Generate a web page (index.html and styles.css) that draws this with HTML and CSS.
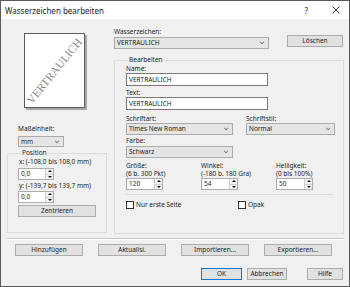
FILE: index.html
```html
<!DOCTYPE html>
<html lang="de">
<head>
    <meta charset="UTF-8">
    <title>Wasserzeichen bearbeiten</title>
    <link rel="stylesheet" href="styles.css">
</head>
<body>
    <div class="window">
        <div class="titlebar">
            <span class="title">Wasserzeichen bearbeiten</span>
            <span class="tb-help">?</span>
            <span class="tb-close">
                <svg width="8" height="8" viewBox="0 0 8 8"><path d="M0.5 0.5 L7.5 7.5 M7.5 0.5 L0.5 7.5" stroke="#222" stroke-width="0.9" fill="none"/></svg>
            </span>
        </div>

        <div class="main">
            <div class="left">
                <div class="preview"><span class="wm">VERTRAULICH</span></div>

                <div class="lbl unit-lbl">Maßeinheit:</div>
                <div class="combo unit">mm<span class="chev"></span></div>

                <fieldset class="group pos">
                    <legend>Position</legend>
                    <div class="lbl">x: (-108,0 bis 108,0 mm)</div>
                    <div class="spin pos-spin">
                        <span class="spin-val">0,0</span>
                        <span class="spin-btns"><i class="up"></i><i class="down"></i></span>
                    </div>
                    <div class="lbl y-lbl">y: (-139,7 bis 139,7 mm)</div>
                    <div class="spin pos-spin y-spin">
                        <span class="spin-val">0,0</span>
                        <span class="spin-btns"><i class="up"></i><i class="down"></i></span>
                    </div>
                    <button class="btn center-btn">Zentrieren</button>
                </fieldset>
            </div>

            <div class="right">
                <div class="lbl wz-lbl">Wasserzeichen:</div>
                <div class="wz-row">
                    <div class="combo wz">VERTRAULICH<span class="chev"></span></div>
                    <button class="btn del-btn">Löschen</button>
                </div>

                <fieldset class="group edit">
                    <legend>Bearbeiten</legend>
                    <div class="lbl">Name:</div>
                    <div class="field">VERTRAULICH</div>
                    <div class="lbl text-lbl">Text:</div>
                    <div class="field">VERTRAULICH</div>

                    <div class="cols font-row">
                        <div class="col">
                            <div class="lbl">Schriftart:</div>
                            <div class="combo font">Times New Roman<span class="chev"></span></div>
                        </div>
                        <div class="col style-col">
                            <div class="lbl">Schriftstil:</div>
                            <div class="combo style">Normal<span class="chev"></span></div>
                        </div>
                    </div>

                    <div class="lbl color-lbl">Farbe:</div>
                    <div class="combo font">Schwarz<span class="chev"></span></div>

                    <div class="cols num-row">
                        <div class="col num-col">
                            <div class="lbl">Größe:</div>
                            <div class="lbl">(6 b. 300 Pkt)</div>
                            <div class="spin num-spin">
                                <span class="spin-val">120</span>
                                <span class="spin-btns"><i class="up"></i><i class="down"></i></span>
                            </div>
                        </div>
                        <div class="col num-col">
                            <div class="lbl">Winkel:</div>
                            <div class="lbl">(-180 b. 180 Gra)</div>
                            <div class="spin num-spin">
                                <span class="spin-val">54</span>
                                <span class="spin-btns"><i class="up"></i><i class="down"></i></span>
                            </div>
                        </div>
                        <div class="col">
                            <div class="lbl">Helligkeit:</div>
                            <div class="lbl">(0 bis 100%)</div>
                            <div class="spin num-spin">
                                <span class="spin-val">50</span>
                                <span class="spin-btns"><i class="up"></i><i class="down"></i></span>
                            </div>
                        </div>
                    </div>

                    <div class="inner-sep"></div>

                    <div class="cols check-row">
                        <label class="check first-check"><span class="box"></span>Nur erste Seite</label>
                        <label class="check"><span class="box"></span>Opak</label>
                    </div>
                </fieldset>
            </div>
        </div>

        <div class="sep"></div>

        <div class="btn-row">
            <button class="btn wide">Hinzufügen</button>
            <button class="btn wide">Aktualisi.</button>
            <button class="btn wide">Importieren...</button>
            <button class="btn wide">Exportieren...</button>
        </div>

        <div class="ok-row">
            <button class="btn ok">OK</button>
            <button class="btn cancel">Abbrechen</button>
            <button class="btn help">Hilfe</button>
        </div>
    </div>
</body>
</html>
```

FILE: styles.css
```css
* {
    box-sizing: border-box;
}

body {
    margin: 0;
    font-family: 'Noto Sans', sans-serif;
    font-size: 6.5px;
    color: #1e1e1e;
}

.window {
    width: 350px;
    height: 287px;
    border: 1px solid #5a5a5a;
    background-color: #f0f0f0;
    overflow: hidden;
}

.titlebar {
    height: 18px;
    background-color: #fff;
    display: flex;
    align-items: center;
    padding-left: 4px;
}

.title {
    font-size: 8px;
    flex: 1;
}

.tb-help {
    font-size: 8px;
    margin-right: 24px;
}

.tb-close {
    display: flex;
    margin-right: 9px;
}

.main {
    display: flex;
    gap: 7px;
    padding-left: 6px;
}

.left {
    width: 100px;
}

.right {
    width: 230px;
}

.lbl {
    line-height: 8px;
    height: 8px;
    white-space: nowrap;
}

/* preview page */
.preview {
    width: 61px;
    height: 75px;
    margin: 14px 0 0 17px;
    background-color: #fff;
    border: 1px solid #5c5c5c;
    box-shadow: 2px 2px 0 #a8a8a8;
    display: flex;
    align-items: center;
    justify-content: center;
}

.wm {
    font-family: 'Liberation Serif', serif;
    font-size: 11.5px;
    line-height: 12px;
    color: #8c8c8c;
    transform: rotate(-51deg);
    white-space: nowrap;
}

.unit-lbl {
    margin: 17px 0 0 11px;
}

/* combo boxes */
.combo {
    position: relative;
    height: 12px;
    line-height: 10px;
    padding-left: 2px;
    background-color: #e5e5e5;
    border: 1px solid #acacac;
    white-space: nowrap;
}

.chev {
    position: absolute;
    right: 4px;
    top: 2px;
    width: 4px;
    height: 4px;
    border-right: 1px solid #707070;
    border-bottom: 1px solid #707070;
    transform: rotate(45deg) scale(0.8);
}

.unit {
    width: 46px;
    height: 11px;
    margin: 3px 0 0 11px;
}

/* group boxes */
.group {
    margin: 0;
    padding: 0 0 0 11px;
    border: 1px solid #dcdcdc;
    min-width: 0;
}

.group legend {
    padding: 0 1px;
    margin-left: 2px;
    line-height: 8px;
    font-size: 6.5px;
}

.pos {
    margin-top: 2px;
    height: 84px;
    padding-left: 11px;
    padding-top: 1px;
}

/* spin boxes */
.spin {
    display: flex;
    height: 12px;
    background-color: #fff;
    border: 1px solid #abadb3;
}

.spin-val {
    flex: 1;
    line-height: 10px;
    padding-left: 2px;
}

.spin-btns {
    width: 8px;
    display: flex;
    flex-direction: column;
    border-left: 1px solid #d0d0d0;
    background-color: #f4f4f4;
}

.spin-btns i {
    flex: 1;
    display: flex;
    align-items: center;
    justify-content: center;
}

.spin-btns .up {
    border-bottom: 1px solid #d0d0d0;
}

.spin-btns .up::after {
    content: "";
    border-left: 2px solid transparent;
    border-right: 2px solid transparent;
    border-bottom: 2px solid #000;
}

.spin-btns .down::after {
    content: "";
    border-left: 2px solid transparent;
    border-right: 2px solid transparent;
    border-top: 2px solid #000;
}

.pos-spin {
    width: 36px;
    margin-top: 2px;
    margin-left: -1px;
}

.y-lbl {
    margin-top: 2px;
}

.y-spin {
    margin-top: 1px;
}

/* buttons */
.btn {
    font-family: 'Noto Sans', sans-serif;
    font-size: 6.5px;
    height: 12px;
    padding: 0;
    line-height: 10px;
    background-color: #e1e1e1;
    border: 1px solid #adadad;
    color: #1e1e1e;
}

.center-btn {
    width: 78px;
    margin: 2px 0 0 -1px;
    display: block;
}

.wz-lbl {
    margin-top: 9px;
}

.wz-row {
    display: flex;
    margin-top: 1px;
}

.wz {
    width: 155px;
}

.del-btn {
    width: 56px;
    margin: -2px 0 0 18px;
}

.edit {
    margin-top: 7px;
    height: 178px;
    padding-top: 1px;
}

.field {
    width: 142px;
    height: 13px;
    line-height: 11px;
    padding-left: 2px;
    background-color: #fff;
    border: 1px solid #7a7a7a;
}

.text-lbl {
    margin-top: 3px;
}

.cols {
    display: flex;
}

.font-row {
    margin-top: 5px;
}

.style-col {
    margin-left: 13px;
}

.font {
    width: 107px;
}

.style {
    width: 89px;
}

.color-lbl {
    margin-top: 2px;
}

.color-lbl + .combo {
    margin-top: 1px;
}

.num-row {
    margin-top: 4px;
}

.num-col {
    width: 75px;
}

.num-spin {
    width: 37px;
}

.inner-sep {
    width: 207px;
    margin-top: 4px;
    border-top: 1px solid #dcdcdc;
}

.check-row {
    margin-top: 6px;
}

.check {
    display: flex;
    align-items: center;
    line-height: 8px;
    white-space: nowrap;
}

.first-check {
    width: 112px;
}

.box {
    width: 8px;
    height: 8px;
    margin-right: 2px;
    background-color: #fff;
    border: 1px solid #333;
}

/* bottom */
.sep {
    margin: 4px 0 0 6px;
    width: 337px;
    border-top: 1px solid #c8c8c8;
    border-bottom: 1px solid #fff;
}

.btn-row {
    display: flex;
    gap: 15px;
    padding-left: 14px;
    margin-top: 4px;
}

.wide {
    width: 68px;
}

.ok-row {
    display: flex;
    justify-content: flex-end;
    padding-right: 6px;
    margin-top: 12px;
}

.ok {
    width: 41px;
    border-color: #0078d7;
}

.cancel {
    width: 40px;
    margin-left: 5px;
}

.help {
    width: 36px;
    margin-left: 20px;
}
```
